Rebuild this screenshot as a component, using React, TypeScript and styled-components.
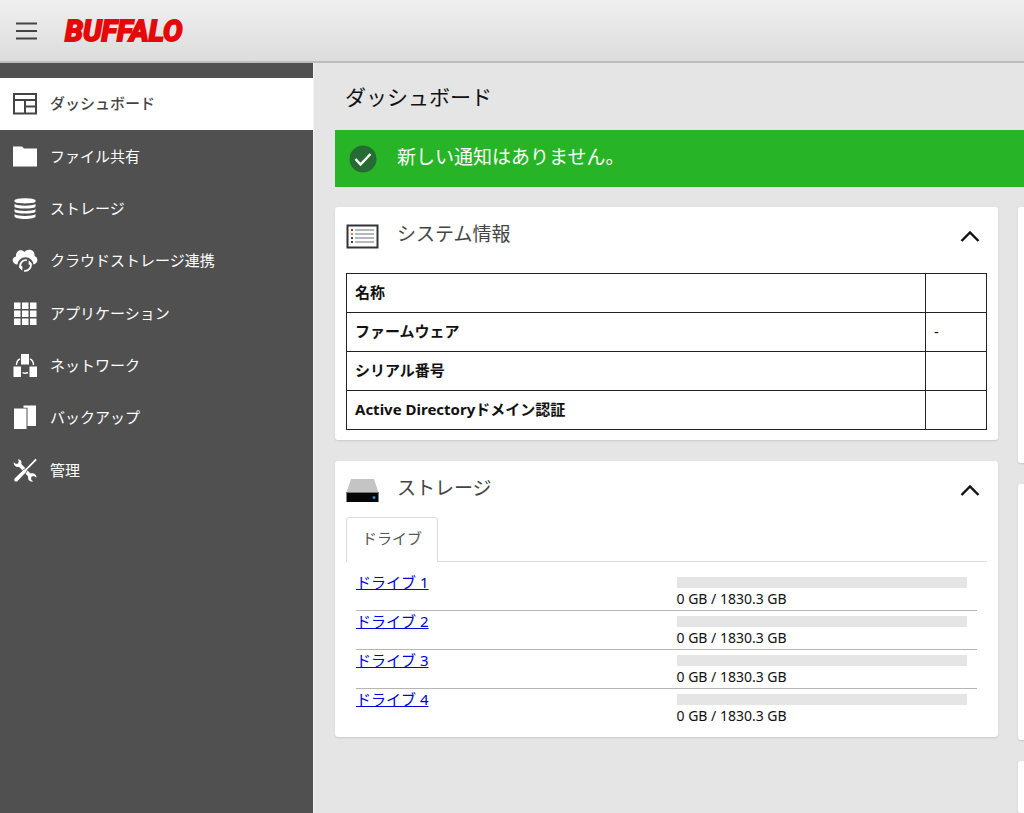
import React, { useState } from "react";
import styled, { createGlobalStyle } from "styled-components";

const GlobalStyle = createGlobalStyle`
  *, *::before, *::after { box-sizing: border-box; }
  body {
    margin: 0;
    font-family: "Noto Sans", "Noto Sans CJK JP", sans-serif;
    font-size: 15px;
    line-height: 20px;
    color: #111;
    background: #e5e5e5;
  }
  ul { list-style: none; margin: 0; padding: 0; }
  button { font: inherit; color: inherit; border: 0; background: none; padding: 0; cursor: pointer; }
`;

const Page = styled.div`
  display: flex;
  flex-direction: column;
  min-height: 100vh;
`;

const Header = styled.header`
  display: flex;
  align-items: center;
  gap: 28px;
  height: 63px;
  padding: 0 15px;
  background: linear-gradient(#efefef, #dcdcdc);
  border-bottom: 2px solid #bdbdbd;
`;

const MenuButton = styled.button`
  display: flex;
`;

const Logo = styled.a`
  color: #e50a0a;
  font-family: Roboto, "Liberation Sans", sans-serif;
  font-size: 29px;
  line-height: 32px;
  font-weight: 700;
  font-style: italic;
  text-decoration: none;
  -webkit-text-stroke: 2px #e50a0a;
`;

const Body = styled.div`
  display: flex;
  flex: 1;
`;

const Sidebar = styled.nav`
  flex: 0 0 314px;
  padding-top: 15px;
  background: #505050;
  border-right: 1px solid #f2f2f2;
`;

const NavList = styled.ul`
  display: grid;
  grid-auto-rows: 1fr;
  height: 419px;
`;

const NavLink = styled.a<{ $active: boolean }>`
  display: flex;
  align-items: center;
  gap: 12px;
  height: 100%;
  padding: 0 12px 2px;
  text-decoration: none;
  color: ${(p) => (p.$active ? "#444" : "#fff")};
  background: ${(p) => (p.$active ? "#fff" : "transparent")};
  font-weight: ${(p) => (p.$active ? 500 : 400)};
`;

const Main = styled.main`
  display: flex;
  flex-direction: column;
  flex: 1;
  min-width: 0;
  padding-left: 21px;
  overflow: hidden;
`;

const PageTitle = styled.h1`
  margin: 0;
  padding: 19px 10px 18px;
  font-size: 21px;
  line-height: 30px;
  font-weight: 400;
`;

const Notice = styled.div`
  display: flex;
  align-items: center;
  gap: 20px;
  height: 57px;
  padding: 0 14px;
  background: #27b527;
  color: #fff;
  font-size: 19px;
`;

const HeadText = styled.span`
  padding-bottom: 4px;
`;

const Columns = styled.div`
  display: grid;
  grid-template-columns: calc(100% - 26px) calc(100% - 26px);
  gap: 20px;
  flex: 1;
  padding-top: 20px;
`;

const Column = styled.div`
  display: flex;
  flex-direction: column;
  gap: 21px;
`;

const Card = styled.section`
  padding: 0 11px 10px;
  background: #fff;
  border-radius: 3px;
  box-shadow: 0 1px 2px #c8c8c8;
`;

const EmptyCard = styled(Card)<{ $grow?: boolean }>`
  min-height: ${(p) => (p.$grow ? 0 : 256)}px;
  flex: ${(p) => (p.$grow ? 1 : "none")};
`;

const CardHead = styled.div`
  display: flex;
  align-items: center;
  gap: 18px;
  height: 56px;
  padding: 2px 7px 0 0;
`;

const CardTitle = styled.h2`
  flex: 1;
  margin: 0;
  padding-bottom: 4px;
  font-size: 19px;
  font-weight: 400;
  color: #444;
`;

const Toggle = styled.button`
  display: flex;
`;

const InfoTable = styled.table`
  width: 100%;
  margin-top: 10px;
  border-collapse: collapse;

  th, td {
    height: 39px;
    padding: 0 8px 2px;
    border: 1px solid #222;
    text-align: left;
  }
  th { font-weight: 700; }
  td { width: 61px; }
`;

const TabBar = styled.div`
  display: flex;
  height: 45px;
  border-bottom: 1px solid #ddd;
`;

const Tab = styled.button`
  height: 45px;
  padding: 0 15px 4px;
  color: #555;
  background: #fff;
  border: 1px solid #ddd;
  border-bottom: 0;
  border-radius: 4px 4px 0 0;
`;

const DriveList = styled.ul`
  padding: 10px 10px 0;
`;

const DriveRow = styled.li`
  display: grid;
  grid-template-columns: 1fr 1fr;
  height: 39px;
  border-bottom: 1px solid #b5b5b5;

  &:last-child { height: 38px; border-bottom: 0; }
`;

const DriveLink = styled.a`
  color: #0000d8;
  justify-self: start;
`;

const Usage = styled.div`
  display: flex;
  flex-direction: column;
  gap: 2px;
  padding: 5px 10px 0;
  font-size: 14px;
  line-height: 18px;
`;

const UsageBar = styled.progress`
  appearance: none;
  display: block;
  width: 100%;
  height: 11px;
  border: 0;
  background: #e5e5e5;

  &::-webkit-progress-bar { background: #e5e5e5; }
  &::-webkit-progress-value { background: #27b527; }
`;

const Icon = ({ children }: { children: React.ReactNode }) => (
  <svg width="26" height="26" viewBox="0 0 26 26" fill="currentColor" aria-hidden="true">
    {children}
  </svg>
);

const DashboardIcon = () => (
  <Icon>
    <g fill="none" stroke="currentColor" strokeWidth="2">
      <path d="M2 4h22v19.500H2zM2 10h22M13 10v13.500M13 16.500h11" />
    </g>
  </Icon>
);

const FolderIcon = () => (
  <Icon>
    <path d="M1 3.500h9l2 2h13V23.500H1z" />
  </Icon>
);

const StorageIcon = () => (
  <Icon>
    <path d="M2.500 5.500C2.500 2.500 23.500 2.500 23.500 5.500V6.500C23.500 9 2.500 9 2.500 6.500z" />
    <path d="M2.500 9C6 11.300 20 11.300 23.500 9V11.500C23.500 14.300 2.500 14.300 2.500 11.500z" />
    <path d="M2.500 14.200C6 16.500 20 16.500 23.500 14.200V16.500C23.500 19.300 2.500 19.300 2.500 16.500z" />
    <path d="M2.500 19.200C6 21.500 20 21.500 23.500 19.200V21.500C23.500 24.800 2.500 24.800 2.500 21.500z" />
  </Icon>
);

const CloudIcon = () => (
  <Icon>
    <path d="M4.500 17.500C-.5 16.500-.5 10.500 4 9.500C3.500 3.500 9.500 1.500 12.500 5C15.500.8 23.500 2.500 22.500 9C26.500 10.500 26.500 16 21.500 17.500z" />
    <circle cx="13.500" cy="18.500" r="8.300" fill="#505050" />
    <g fill="none" stroke="currentColor" strokeWidth="1.800">
      <path d="M9 21.300A5.300 5.300 0 0 1 14.800 13.400M18 15.700A5.300 5.300 0 0 1 12.200 23.600" />
    </g>
    <path d="M6.500 19.500h4l-.3 4.300zM20.500 17.500h-4l.3-4.300z" />
  </Icon>
);

const AppsIcon = () => (
  <Icon>
    {[2, 10, 18].map((y) =>
      [2, 10, 18].map((x) => <rect key={`${x}-${y}`} x={x} y={y + 0.5} width="6.500" height="6.500" />)
    )}
  </Icon>
);

const NetworkIcon = () => (
  <Icon>
    <path d="M9 2h8v10.500H9zM1.500 14.500H9V25H1.500zM17.500 14.500H25V25h-7.500z" />
    <path
      d="M4.500 13C4.500 10 5.500 8 8 7M18 7C20.500 8 21.500 10 21.500 13M10.500 20.500Q13 22 16 20.500"
      fill="none"
      stroke="currentColor"
      strokeWidth="1.400"
    />
  </Icon>
);

const BackupIcon = () => (
  <Icon>
    <path d="M11.500 1.500h12.500v20.500H15.500V3.800h-4z" />
    <path d="M2 4.500h12.500V25H2z" />
  </Icon>
);

const ToolsIcon = () => (
  <Icon>
    <path d="M6 2.300c3 .2 4 2.200 3.300 4.700l9.200 9.400c3-.8 6.300 1 5.900 4.300l-2.500-1.700-2.500.8-.4 2.400 2.200 2.200c-3.300.5-5.800-1.600-5-5L7.200 10C4 10.500 1.500 8.500 1.700 5.200l2.300 1.900 2-.6.800-2z" />
    <path d="M23.500 1.200L25.200 3 15.500 12.800l-1 2.200-8.800 9.300c-2.200 1.800-5-.8-3.300-3L11.500 12.500l2.300-1.200z" stroke="#505050" strokeWidth=".8" />
  </Icon>
);

const ListIcon = () => (
  <svg width="33" height="25" viewBox="0 0 33 25" aria-hidden="true">
    <rect x="1.500" y="1.500" width="30" height="22" fill="#fff" stroke="#333" strokeWidth="2" />
    {["#a33", "#e08030", "#345", "#345"].map((color, i) => (
      <g key={i}>
        <rect x="5" y={5 + i * 4} width="2" height="2" fill={color} />
        <rect x="9" y={5 + i * 4} width="19" height="2" fill="#b4b9c0" />
      </g>
    ))}
  </svg>
);

const DriveIcon = () => (
  <svg width="33" height="25" viewBox="0 0 33 25" aria-hidden="true">
    <path d="M5 1h23l4.500 13.500H.5z" fill="#c4c4c4" />
    <path d="M.5 14h32v10H.5z" fill="#050505" />
    <path d="M.5 14h32v1H.5z" fill="#777" />
    <circle cx="28" cy="19.500" r="1.500" fill="#2b8fd0" />
  </svg>
);

const CheckIcon = () => (
  <svg width="28" height="28" viewBox="0 0 28 28" aria-hidden="true">
    <circle cx="14" cy="14" r="13.500" fill="#266b33" />
    <path d="M6.500 14l5 5.500L21.500 9" fill="none" stroke="#fff" strokeWidth="2.500" />
  </svg>
);

const Chevron = ({ open }: { open: boolean }) => (
  <svg width="20" height="12" viewBox="0 0 20 12" aria-hidden="true">
    <path d={open ? "M1.500 11L10 2.500l8.500 8.500" : "M1.500 1.500L10 10l8.500-8.500"} fill="none" stroke="#111" strokeWidth="2.400" />
  </svg>
);

const navItems = [
  { label: "ダッシュボード", icon: <DashboardIcon /> },
  { label: "ファイル共有", icon: <FolderIcon /> },
  { label: "ストレージ", icon: <StorageIcon /> },
  { label: "クラウドストレージ連携", icon: <CloudIcon /> },
  { label: "アプリケーション", icon: <AppsIcon /> },
  { label: "ネットワーク", icon: <NetworkIcon /> },
  { label: "バックアップ", icon: <BackupIcon /> },
  { label: "管理", icon: <ToolsIcon /> },
];

const systemInfo = [
  ["名称", ""],
  ["ファームウェア", "-"],
  ["シリアル番号", ""],
  ["Active Directoryドメイン認証", ""],
];

const drives = [1, 2, 3, 4].map((n) => ({ name: `ドライブ ${n}`, used: 0, total: 1830.3 }));

function Panel({ title, icon, children }: { title: string; icon: React.ReactNode; children: React.ReactNode }) {
  const [open, setOpen] = useState(true);
  return (
    <Card>
      <CardHead>
        {icon}
        <CardTitle>{title}</CardTitle>
        <Toggle type="button" aria-label={title} aria-expanded={open} onClick={() => setOpen(!open)}>
          <Chevron open={open} />
        </Toggle>
      </CardHead>
      {open && children}
    </Card>
  );
}

export default function App() {
  return (
    <Page lang="ja">
      <GlobalStyle />
      <Header>
        <MenuButton type="button" aria-label="メニュー">
          <svg width="22" height="20" viewBox="0 0 22 20" aria-hidden="true">
            <path d="M1 2.500h21M1 10h21M1 17.500h21" stroke="#444" strokeWidth="2" />
          </svg>
        </MenuButton>
        <Logo href="#">BUFFALO</Logo>
      </Header>
      <Body>
        <Sidebar>
          <NavList>
            {navItems.map((item, i) => (
              <li key={item.label}>
                <NavLink href="#" $active={i === 0} aria-current={i === 0 ? "page" : undefined}>
                  {item.icon}
                  {item.label}
                </NavLink>
              </li>
            ))}
          </NavList>
        </Sidebar>
        <Main>
          <PageTitle>ダッシュボード</PageTitle>
          <Notice role="status">
            <CheckIcon />
            <HeadText>新しい通知はありません。</HeadText>
          </Notice>
          <Columns>
            <Column>
              <Panel title="システム情報" icon={<ListIcon />}>
                <InfoTable>
                  <tbody>
                    {systemInfo.map(([name, value]) => (
                      <tr key={name}>
                        <th scope="row">{name}</th>
                        <td>{value}</td>
                      </tr>
                    ))}
                  </tbody>
                </InfoTable>
              </Panel>
              <Panel title="ストレージ" icon={<DriveIcon />}>
                <TabBar role="tablist">
                  <Tab type="button" role="tab" aria-selected="true">ドライブ</Tab>
                </TabBar>
                <DriveList>
                  {drives.map((drive) => (
                    <DriveRow key={drive.name}>
                      <DriveLink href="#">{drive.name}</DriveLink>
                      <Usage>
                        <UsageBar value={drive.used} max={drive.total} aria-label={drive.name} />
                        <span>{drive.used} GB / {drive.total} GB</span>
                      </Usage>
                    </DriveRow>
                  ))}
                </DriveList>
              </Panel>
            </Column>
            <Column>
              <EmptyCard />
              <EmptyCard />
              <EmptyCard $grow />
            </Column>
          </Columns>
        </Main>
      </Body>
    </Page>
  );
}
